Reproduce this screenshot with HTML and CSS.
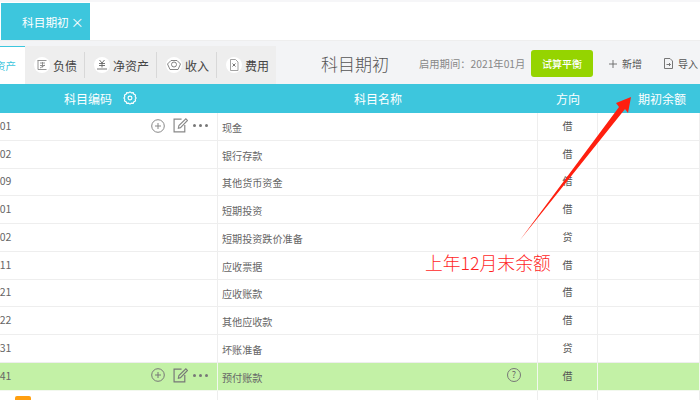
FILE: index.html
```html
<!DOCTYPE html>
<html lang="zh">
<head>
<meta charset="utf-8">
<title>科目期初</title>
<link rel="stylesheet" href="styles.css">
</head>
<body>
<div class="page">
  <header class="tabbar">
    <div class="tab"><span>科目期初</span><span class="tab-x">×</span></div>
  </header>
  <section class="toolbar">
    <nav class="cats">
      <div class="cat active">资产</div>
      <div class="cat-group">
        <div class="cat cat-a">
          <svg class="cat-ico" viewBox="0 0 16 16"><circle cx="8" cy="8" r="8" fill="#fff"/><path d="M3.500 3.500h9M4 3.500v9M4 12.500h8.500M6 6h5M6 8.500h5M8.500 5v5.500M6 11l5-3" fill="none" stroke="#888" stroke-width=".9"/></svg>
          <span>负债</span>
        </div>
        <div class="cat cat-b">
          <svg class="cat-ico" viewBox="0 0 16 16"><circle cx="8" cy="8" r="8" fill="#fff"/><path d="M5.500 3l2.500 3 2.500-3M5 6.500h6M5 8.500h6M8 6v4.500M3 12h10" fill="none" stroke="#666" stroke-width=".9"/></svg>
          <span>净资产</span>
        </div>
        <div class="cat cat-c">
          <svg class="cat-ico" viewBox="0 0 16 16"><circle cx="8" cy="8" r="8" fill="#fff"/><path d="M1.500 7L5 3.500h6L14.500 7 12 12.500H4z" fill="none" stroke="#777" stroke-width=".9"/><circle cx="8" cy="7.500" r="2.500" fill="none" stroke="#777" stroke-width=".9"/></svg>
          <span>收入</span>
        </div>
        <div class="cat cat-d">
          <svg class="cat-ico" viewBox="0 0 16 16"><circle cx="8" cy="8" r="8" fill="#fff"/><path d="M4.500 2.500h5l2.500 2.500v8.500H4.500z" fill="none" stroke="#999" stroke-width=".9"/><path d="M6.500 6.500l3 3M9.500 6.500l-3 3" stroke="#666" stroke-width=".9"/></svg>
          <span>费用</span>
        </div>
      </div>
    </nav>
    <h1 class="title">科目期初</h1>
    <div class="period">启用期间：2021年01月</div>
    <button class="trial">试算平衡</button>
    <div class="action add">
      <svg class="act-ico" viewBox="0 0 8 8"><path d="M4 0v8M0 4h8" stroke="#666" stroke-width=".9"/></svg>
      <span>新增</span>
    </div>
    <div class="action import">
      <svg class="act-ico import-ico" viewBox="0 0 9 11"><path d="M.5.500h5.500l2.500 2.500v7.500H.5z" fill="none" stroke="#777"/><path d="M2.500 6.500h4M5 5l1.500 1.500L5 8" fill="none" stroke="#777"/></svg>
      <span>导入</span>
    </div>
  </section>
  <section class="table">
    <div class="row head">
      <div class="code-head"><span>科目编码</span>
        <svg class="gear" viewBox="0 0 16 16"><path d="M8 1l1.700 1.200 2-.3.800 1.800 1.800.9-.3 2L15 8l-1 1.400.3 2-1.800.9-.8 1.800-2-.3L8 15l-1.700-1.200-2 .3-.8-1.800-1.800-.9.3-2L1 8l1-1.400-.3-2 1.800-.9.800-1.800 2 .3z" fill="none" stroke="#fff" stroke-width="1.300"/><circle cx="8" cy="8" r="2.200" fill="none" stroke="#fff" stroke-width="1.300"/></svg>
      </div>
      <div class="name-head">科目名称</div>
      <div class="dir-head">方向</div>
      <div class="bal-head">期初余额</div>
    </div>
    <div class="row">
      <div class="code"><span class="num">1001</span>
        <span class="ops">
          <svg class="op" viewBox="0 0 14 14"><circle cx="7" cy="7" r="6.300" fill="none" stroke="#888"/><path d="M7 4v6M4 7h6" stroke="#888"/></svg>
          <svg class="op op-edit" viewBox="0 0 14 14"><path d="M11 6.500V13H1V1h7" fill="none" stroke="#888" stroke-width="1.100"/><path d="M5 9.500l.5-2.500L12 .8l1.500 1.500L7 9z" fill="none" stroke="#888"/></svg>
          <span class="dots"><i></i><i></i><i></i></span>
        </span>
      </div>
      <div class="name">现金</div><div class="dir">借</div><div class="bal"></div>
    </div>
    <div class="row"><div class="code"><span class="num">1002</span></div><div class="name">银行存款</div><div class="dir">借</div><div class="bal"></div></div>
    <div class="row"><div class="code"><span class="num">1009</span></div><div class="name">其他货币资金</div><div class="dir">借</div><div class="bal"></div></div>
    <div class="row"><div class="code"><span class="num">1101</span></div><div class="name">短期投资</div><div class="dir">借</div><div class="bal"></div></div>
    <div class="row"><div class="code"><span class="num">1102</span></div><div class="name">短期投资跌价准备</div><div class="dir">贷</div><div class="bal"></div></div>
    <div class="row"><div class="code"><span class="num">1111</span></div><div class="name">应收票据</div><div class="dir">借</div><div class="bal"></div></div>
    <div class="row"><div class="code"><span class="num">1121</span></div><div class="name">应收账款</div><div class="dir">借</div><div class="bal"></div></div>
    <div class="row"><div class="code"><span class="num">1122</span></div><div class="name">其他应收款</div><div class="dir">借</div><div class="bal"></div></div>
    <div class="row"><div class="code"><span class="num">1131</span></div><div class="name">坏账准备</div><div class="dir">贷</div><div class="bal"></div></div>
    <div class="row selected">
      <div class="code"><span class="num">1141</span>
        <span class="ops">
          <svg class="op" viewBox="0 0 14 14"><circle cx="7" cy="7" r="6.300" fill="none" stroke="#777"/><path d="M7 4v6M4 7h6" stroke="#777"/></svg>
          <svg class="op op-edit" viewBox="0 0 14 14"><path d="M11 6.500V13H1V1h7" fill="none" stroke="#777" stroke-width="1.100"/><path d="M5 9.500l.5-2.500L12 .8l1.500 1.500L7 9z" fill="none" stroke="#777"/></svg>
          <span class="dots"><i></i><i></i><i></i></span>
        </span>
      </div>
      <div class="name name-help"><span>预付账款</span><span class="help">?</span></div><div class="dir">借</div><div class="bal"></div>
    </div>
    <div class="row"><div class="code"><span class="flag"></span></div><div class="name"></div><div class="dir"></div><div class="bal"></div></div>
  </section>
</div>
<svg class="arrow" viewBox="0 0 700 400"><polygon points="520,240 619,107 616,103 631,97 628,113 625,109" fill="#ff1f0f"/></svg>
<div class="note">上年12月末余额</div>
</body>
</html>
```

FILE: styles.css
```css
* { box-sizing: border-box; }
html, body { margin: 0; padding: 0; }
body {
  width: 700px;
  height: 400px;
  overflow: hidden;
  position: relative;
  background: #fff;
  font-family: "Noto Sans CJK SC", "Liberation Sans", sans-serif;
  color: #555;
}
.page { display: flex; flex-direction: column; height: 400px; }
.tabbar {
  height: 40px;
  padding: 1px 0 0 1px;
  border-top: 2px solid #f6f6f8;
  display: flex;
}
.tab {
  width: 89px;
  height: 37px;
  background: #3dc6dd;
  color: #fff;
  font-size: 11.700px;
  display: flex;
  align-items: center;
  gap: 2px;
  padding-left: 21px;
}
.tab-x { font-size: 13px; line-height: 1; }
.toolbar {
  height: 44px;
  background: #f3f4f6;
  border-top: 1px solid #eeeeee;
  padding-top: 5px;
  display: flex;
  align-items: flex-start;
}
.cats { display: flex; height: 38px; }
.cat {
  display: flex;
  align-items: center;
  gap: 3px;
  font-size: 12px;
  color: #444;
}
.cat.active {
  width: 25px;
  background: #fff;
  border-top: 1px solid #3dc6dd;
  color: #3dc6dd;
  font-size: 10.500px;
  white-space: nowrap;
  padding-right: 9px;
  direction: rtl;
}
.cat-group {
  width: 251px;
  background: #eeeeee;
  display: flex;
  align-items: center;
  padding-left: 9px;
}
.cat-ico { width: 16px; height: 16px; flex: none; }
.cat-a { width: 51px; }
.cat-b { width: 72px; padding-left: 9px; }
.cat-a, .cat-b, .cat-c { height: 26px; border-right: 1px solid #d8d8d8; }
.cat-c { width: 60px; padding-left: 9px; }
.cat-d { padding-left: 9px; }
.title {
  margin: 4px 0 0 45px;
  font-size: 17px;
  font-weight: 300;
  color: #555;
  line-height: 28px;
  width: 98px;
  white-space: nowrap;
}
.period {
  margin-top: 4px;
  font-size: 10.300px;
  color: #888;
  line-height: 27px;
  white-space: nowrap;
  width: 112px;
}
.trial {
  width: 62px;
  height: 27px;
  margin: 4px 16px 0 0;
  border: 0;
  border-radius: 3px;
  padding: 0;
  background: #95d400;
  color: #fff;
  font: 500 10px "Noto Sans CJK SC", sans-serif;
}
.action {
  display: flex;
  align-items: center;
  gap: 5px;
  height: 27px;
  margin-top: 4px;
  font-size: 10px;
  color: #555;
  white-space: nowrap;
}
.add { width: 55px; }
.act-ico { width: 8px; height: 8px; flex: none; }
.import-ico { width: 9px; height: 11px; }
.table { display: flex; flex-direction: column; flex: 1; }
.row {
  display: grid;
  grid-template-columns: 218px 320px 60px 102px;
  height: 27.750px;
  flex: none;
  border-bottom: 1px solid #eeeeee;
  font-size: 10.100px;
}
.row > div { border-right: 1px solid #eeeeee; display: flex; align-items: center; }
.row.head {
  height: 29px;
  background: #3dc6dd;
  color: #fff;
  font-size: 12px;
  border-bottom: 0;
}
.row.head > div { border-right: 0; }
.code-head { padding-left: 64px; gap: 11px; }
.gear { width: 14px; height: 14px; margin-top: -2px; }
.name-head { padding-left: 136px; }
.dir-head { justify-content: center; }
.bal-head { padding-left: 40px; }
.code { position: relative; padding-bottom: 2px; }
.num { margin-left: -12px; color: #666; font-size: 10.500px; }
.ops {
  position: absolute;
  left: 151px;
  top: 5px;
  display: flex;
  align-items: center;
  gap: 8px;
}
.op { width: 14px; height: 14px; }
.op-edit { width: 15px; height: 15px; }
.dots { display: flex; gap: 3px; margin-left: -3px; }
.dots i { width: 3px; height: 3px; border-radius: 50%; background: #777; }
.name { padding: 2px 0 0 4px; color: #666; }
.name-help { justify-content: space-between; padding-right: 16px; }
.help {
  width: 14px;
  height: 14px;
  margin-top: -5px;
  border: 1px solid #777;
  border-radius: 50%;
  font-size: 9px;
  line-height: 12px;
  text-align: center;
  color: #666;
}
.dir { justify-content: center; padding-bottom: 2px; color: #555; }
.selected { background: #c3f1a6; border-bottom-color: #f2f8ee; }
.selected > div { border-right-color: #f2f8ee; }
.flag {
  position: absolute;
  left: 15px;
  top: 5px;
  width: 16px;
  height: 12px;
  background: #ff9f10;
  border-radius: 2px 2px 0 0;
}
.arrow { position: absolute; left: 0; top: 0; width: 700px; height: 400px; }
.note {
  position: absolute;
  left: 425px;
  top: 250px;
  font-size: 17.800px;
  font-weight: 300;
  line-height: 24px;
  color: #ff1f1f;
  white-space: nowrap;
}
```
